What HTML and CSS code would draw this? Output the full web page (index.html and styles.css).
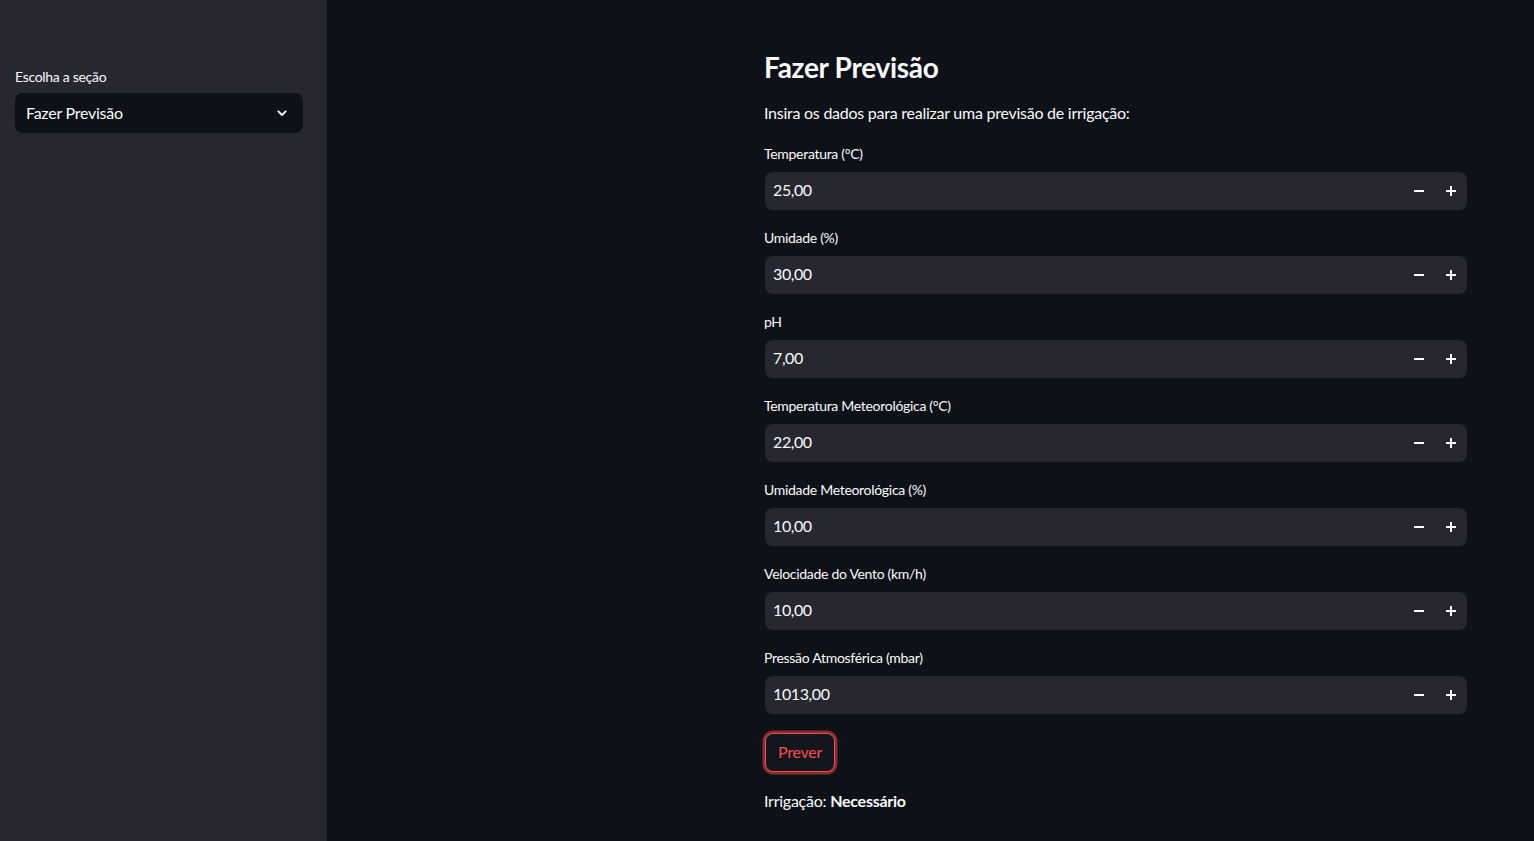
FILE: index.html
```html
<!DOCTYPE html>
<html lang="pt">
<head>
<meta charset="utf-8">
<title>Fazer Previsão</title>
<link rel="stylesheet" href="styles.css">
</head>
<body>
<div class="app">
  <aside class="sidebar">
    <label class="side-label">Escolha a seção</label>
    <div class="select">
      <span class="select-text">Fazer Previsão</span>
      <svg class="chev" width="16" height="16" viewBox="0 0 24 24"><path d="M6.5 9.5l5.5 5.5 5.5-5.5" fill="none" stroke="#fafafa" stroke-width="2.8" stroke-linecap="round" stroke-linejoin="round"/></svg>
    </div>
  </aside>
  <main class="main">
    <div class="content">
      <h2 class="title">Fazer Previsão</h2>
      <p class="intro">Insira os dados para realizar uma previsão de irrigação:</p>

      <div class="field">
        <label class="flabel">Temperatura (°C)</label>
        <div class="num"><span class="val">25,00</span><button class="step"><svg width="10" height="10" viewBox="0 0 10 10"><path d="M0 5h10" stroke="#fafafa" stroke-width="2"/></svg></button><button class="step"><svg width="10" height="10" viewBox="0 0 10 10"><path d="M0 5h10M5 0v10" stroke="#fafafa" stroke-width="2"/></svg></button></div>
      </div>
      <div class="field">
        <label class="flabel">Umidade (%)</label>
        <div class="num"><span class="val">30,00</span><button class="step"><svg width="10" height="10" viewBox="0 0 10 10"><path d="M0 5h10" stroke="#fafafa" stroke-width="2"/></svg></button><button class="step"><svg width="10" height="10" viewBox="0 0 10 10"><path d="M0 5h10M5 0v10" stroke="#fafafa" stroke-width="2"/></svg></button></div>
      </div>
      <div class="field">
        <label class="flabel">pH</label>
        <div class="num"><span class="val">7,00</span><button class="step"><svg width="10" height="10" viewBox="0 0 10 10"><path d="M0 5h10" stroke="#fafafa" stroke-width="2"/></svg></button><button class="step"><svg width="10" height="10" viewBox="0 0 10 10"><path d="M0 5h10M5 0v10" stroke="#fafafa" stroke-width="2"/></svg></button></div>
      </div>
      <div class="field">
        <label class="flabel">Temperatura Meteorológica (°C)</label>
        <div class="num"><span class="val">22,00</span><button class="step"><svg width="10" height="10" viewBox="0 0 10 10"><path d="M0 5h10" stroke="#fafafa" stroke-width="2"/></svg></button><button class="step"><svg width="10" height="10" viewBox="0 0 10 10"><path d="M0 5h10M5 0v10" stroke="#fafafa" stroke-width="2"/></svg></button></div>
      </div>
      <div class="field">
        <label class="flabel">Umidade Meteorológica (%)</label>
        <div class="num"><span class="val">10,00</span><button class="step"><svg width="10" height="10" viewBox="0 0 10 10"><path d="M0 5h10" stroke="#fafafa" stroke-width="2"/></svg></button><button class="step"><svg width="10" height="10" viewBox="0 0 10 10"><path d="M0 5h10M5 0v10" stroke="#fafafa" stroke-width="2"/></svg></button></div>
      </div>
      <div class="field">
        <label class="flabel">Velocidade do Vento (km/h)</label>
        <div class="num"><span class="val">10,00</span><button class="step"><svg width="10" height="10" viewBox="0 0 10 10"><path d="M0 5h10" stroke="#fafafa" stroke-width="2"/></svg></button><button class="step"><svg width="10" height="10" viewBox="0 0 10 10"><path d="M0 5h10M5 0v10" stroke="#fafafa" stroke-width="2"/></svg></button></div>
      </div>
      <div class="field">
        <label class="flabel">Pressão Atmosférica (mbar)</label>
        <div class="num"><span class="val">1013,00</span><button class="step"><svg width="10" height="10" viewBox="0 0 10 10"><path d="M0 5h10" stroke="#fafafa" stroke-width="2"/></svg></button><button class="step"><svg width="10" height="10" viewBox="0 0 10 10"><path d="M0 5h10M5 0v10" stroke="#fafafa" stroke-width="2"/></svg></button></div>
      </div>

      <button class="prever">Prever</button>
      <p class="result">Irrigação: <strong>Necessário</strong></p>
    </div>
  </main>
</div>
</body>
</html>
```
FILE: styles.css
```css
* { box-sizing: border-box; }
html, body { margin: 0; padding: 0; height: 100%; }
body {
  background: #0e1117;
  color: #fafafa;
  font-family: "Lato", "Noto Sans", sans-serif;
  overflow: hidden;
}
.app { display: flex; height: 841px; }
.sidebar {
  width: 327px;
  flex: none;
  background: #262730;
  padding: 68px 24px 0 15px;
  display: flex;
  flex-direction: column;
}
.side-label { font-size: 14px; line-height: 18px; margin-bottom: 7px; letter-spacing: -0.3px; }
.select {
  height: 40px;
  background: #0e1117;
  border-radius: 8px;
  display: flex;
  align-items: center;
  justify-content: space-between;
  padding: 0 13px 0 11px;
  font-size: 16px;
  letter-spacing: -0.25px;
}
.select-text { padding-bottom: 2px; }
.chev { display: block; }
.main { flex: 1; padding: 47px 0 0 437px; }
.content { width: 703px; }
.title {
  margin: 0;
  font-size: 28px;
  line-height: 40px;
  font-weight: 700;
  letter-spacing: -0.3px;
}
.intro { margin: 14px 0 0; font-size: 16px; line-height: 24px; letter-spacing: -0.25px; }
.field { margin-top: 20px; }
.field + .field { margin-top: 19px; }
.flabel { display: block; font-size: 14px; line-height: 18px; margin-bottom: 9px; letter-spacing: -0.3px; }
.num {
  height: 38px;
  margin-left: 1px;
  background: #262730;
  border-radius: 8px;
  display: flex;
  align-items: center;
  padding-left: 8px;
}
.val { flex: 1; font-size: 16px; letter-spacing: -0.4px; padding-bottom: 3px; }
.step {
  width: 32px;
  height: 38px;
  background: transparent;
  border: 0;
  padding: 0;
  display: flex;
  align-items: center;
  justify-content: center;
  cursor: pointer;
}
.step svg { display: block; }
.prever {
  display: block;
  margin: 19px 0 0 1px;
  height: 39px;
  padding: 0 12px 3px;
  background: #13161e;
  color: #ff4b4b;
  border: 1px solid #ff4b4b;
  border-radius: 8px;
  box-shadow: 0 0 0 2.5px rgba(255, 75, 75, 0.5);
  font-family: inherit;
  font-size: 16px;
  letter-spacing: -0.25px;
}
.result { margin: 17px 0 0; font-size: 16px; line-height: 24px; letter-spacing: -0.25px; }
.result strong { font-weight: 700; }
```
